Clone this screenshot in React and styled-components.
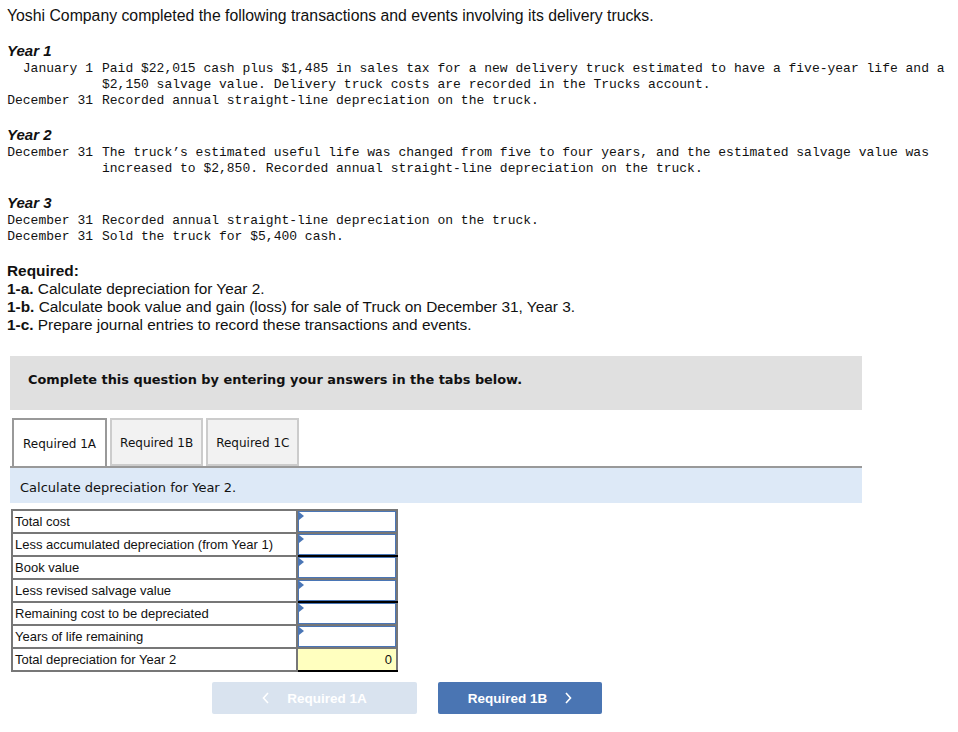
import React from "react";
import styled, { createGlobalStyle } from "styled-components";

const GlobalStyle = createGlobalStyle`
  body {
    margin: 0;
    background: #fff;
    color: #111;
    font-family: "Liberation Sans", Arial, sans-serif;
  }
`;

const entries = [
  {
    year: "Year 1",
    rows: [
      {
        date: "January 1",
        text: "Paid $22,015 cash plus $1,485 in sales tax for a new delivery truck estimated to have a five-year life and a $2,150 salvage value. Delivery truck costs are recorded in the Trucks account.",
      },
      { date: "December 31", text: "Recorded annual straight-line depreciation on the truck." },
    ],
  },
  {
    year: "Year 2",
    rows: [
      {
        date: "December 31",
        text: "The truck’s estimated useful life was changed from five to four years, and the estimated salvage value was increased to $2,850. Recorded annual straight-line depreciation on the truck.",
      },
    ],
  },
  {
    year: "Year 3",
    rows: [
      { date: "December 31", text: "Recorded annual straight-line depreciation on the truck." },
      { date: "December 31", text: "Sold the truck for $5,400 cash." },
    ],
  },
];

const lines = [
  { label: "Total cost" },
  { label: "Less accumulated depreciation (from Year 1)", underline: true },
  { label: "Book value" },
  { label: "Less revised salvage value", underline: true },
  { label: "Remaining cost to be depreciated" },
  { label: "Years of life remaining" },
  { label: "Total depreciation for Year 2", total: "0" },
];

const ChevronIcon = ({ dir }) => (
  <svg width="8" height="12" viewBox="0 0 8 12">
    <path
      d={dir === "left" ? "M6 1 L1.5 6 L6 11" : "M2 1 L6.5 6 L2 11"}
      fill="none"
      stroke="currentColor"
      strokeWidth="1.6"
    />
  </svg>
);

export default function App() {
  return (
    <Page>
      <GlobalStyle />
      <Intro>
        Yoshi Company completed the following transactions and events involving its delivery trucks.
      </Intro>

      {entries.map((e) => (
        <YearBlock key={e.year}>
          <YearLabel>{e.year}</YearLabel>
          <Events>
            {e.rows.map((r, i) => (
              <React.Fragment key={i}>
                <EventDate>{r.date}</EventDate>
                <EventText>{r.text}</EventText>
              </React.Fragment>
            ))}
          </Events>
        </YearBlock>
      ))}

      <Required>
        <div><b>Required:</b></div>
        <div><b>1-a.</b> Calculate depreciation for Year 2.</div>
        <div><b>1-b.</b> Calculate book value and gain (loss) for sale of Truck on December 31, Year 3.</div>
        <div><b>1-c.</b> Prepare journal entries to record these transactions and events.</div>
      </Required>

      <Notice>Complete this question by entering your answers in the tabs below.</Notice>

      <Tabs>
        <Tab $active>Required 1A</Tab>
        <Tab>Required 1B</Tab>
        <Tab>Required 1C</Tab>
      </Tabs>
      <Band>Calculate depreciation for Year 2.</Band>

      <Sheet>
        <tbody>
          {lines.map((l) => (
            <tr key={l.label}>
              <LabelCell>{l.label}</LabelCell>
              {l.total ? (
                <TotalCell>{l.total}</TotalCell>
              ) : (
                <InputCell $underline={l.underline}>
                  <Entry />
                </InputCell>
              )}
            </tr>
          ))}
        </tbody>
      </Sheet>

      <Nav>
        <NavButton $disabled>
          <ChevronIcon dir="left" /> Required 1A
        </NavButton>
        <NavButton>
          Required 1B <ChevronIcon dir="right" />
        </NavButton>
      </Nav>
    </Page>
  );
}

const Page = styled.div`
  padding: 7px 6px 20px 6px;
  font-size: 15px;
`;

const Intro = styled.div`
  font-size: 15.8px;
  line-height: 18px;
  margin: 0 0 1px 1px;
`;

const YearBlock = styled.div`
  margin-top: 15px;
`;

const YearLabel = styled.div`
  font-weight: bold;
  font-style: italic;
  line-height: 21px;
  margin-left: 1px;
`;

const Events = styled.div`
  display: grid;
  grid-template-columns: 87px 1fr;
  column-gap: 9px;
  font-family: "Liberation Mono", "Courier New", monospace;
  font-size: 13px;
  line-height: 16px;
`;

const EventDate = styled.div`
  text-align: right;
  white-space: nowrap;
`;

const EventText = styled.div``;

const Required = styled.div`
  margin-top: 17px;
  font-size: 15.4px;
  line-height: 18px;
  margin-left: 1px;
`;

const Notice = styled.div`
  margin: 22px 0 0 4px;
  width: 852px;
  height: 54px;
  box-sizing: border-box;
  padding: 16px 0 0 18px;
  background: #e0e0e0;
  font-family: "DejaVu Sans", Verdana, sans-serif;
  font-weight: bold;
  font-size: 12.9px;
`;

const Tabs = styled.div`
  margin: 8px 0 0 4px;
  width: 852px;
  padding-left: 2px;
  box-sizing: border-box;
  display: flex;
  gap: 3px;
  border-bottom: 2px solid #999;
`;

const Tab = styled.div`
  height: 48px;
  margin-bottom: ${(p) => (p.$active ? "-2px" : "0")};
  padding: ${(p) => (p.$active ? "2px 9px 0" : "2px 8px 0")};
  box-sizing: border-box;
  display: flex;
  align-items: center;
  justify-content: center;
  background: ${(p) => (p.$active ? "#fff" : "#f2f2f2")};
  border: 2px solid ${(p) => (p.$active ? "#999" : "#ccc")};
  border-bottom: ${(p) => (p.$active ? "none" : "2px solid #ccc")};
  font-family: "DejaVu Sans", Verdana, sans-serif;
  font-size: 12px;
  color: #111;
`;

const Band = styled.div`
  margin-left: 4px;
  width: 852px;
  height: 35px;
  box-sizing: border-box;
  padding: 4px 0 0 10px;
  display: flex;
  align-items: center;
  background: #dde9f7;
  font-family: "DejaVu Sans", Verdana, sans-serif;
  font-size: 13px;
`;

const Sheet = styled.table`
  margin: 6px 0 0 5px;
  border-collapse: collapse;
  border: 2px solid #777;
  font-size: 13px;
`;

const LabelCell = styled.td`
  width: 281px;
  height: 21px;
  padding: 0 0 0 2px;
  border: 2px solid #777;
  line-height: 21px;
  white-space: nowrap;
`;

const InputCell = styled.td`
  width: 98px;
  height: 21px;
  padding: 0;
  border: 2px solid #777;
  border-bottom: 2px solid ${(p) => (p.$underline ? "#000" : "#777")};
`;

const TotalCell = styled.td`
  width: 98px;
  height: 21px;
  padding: 0 4px 0 0;
  box-sizing: border-box;
  border: 2px solid #777;
  border-bottom: 2px solid #000;
  background: #ffffbf;
  text-align: right;
  line-height: 21px;
`;

const Entry = styled.div`
  height: 21px;
  box-sizing: border-box;
  border: 1px solid #4a76b6;
  background: #fff;
  position: relative;

  &::before {
    content: "";
    position: absolute;
    left: 0;
    top: 0;
    border-top: 4px solid transparent;
    border-bottom: 4px solid transparent;
    border-left: 5px solid #4a76b6;
  }
`;

const Nav = styled.div`
  margin: 10px 0 0 206px;
  display: flex;
  gap: 21px;
`;

const NavButton = styled.div`
  width: ${(p) => (p.$disabled ? "205px" : "164px")};
  height: 32px;
  border-radius: 2px;
  display: flex;
  align-items: center;
  justify-content: center;
  gap: 17px;
  background: ${(p) => (p.$disabled ? "#d9e3ef" : "#4a75b3")};
  color: #fff;
  font-weight: bold;
  font-size: 13.5px;
`;
